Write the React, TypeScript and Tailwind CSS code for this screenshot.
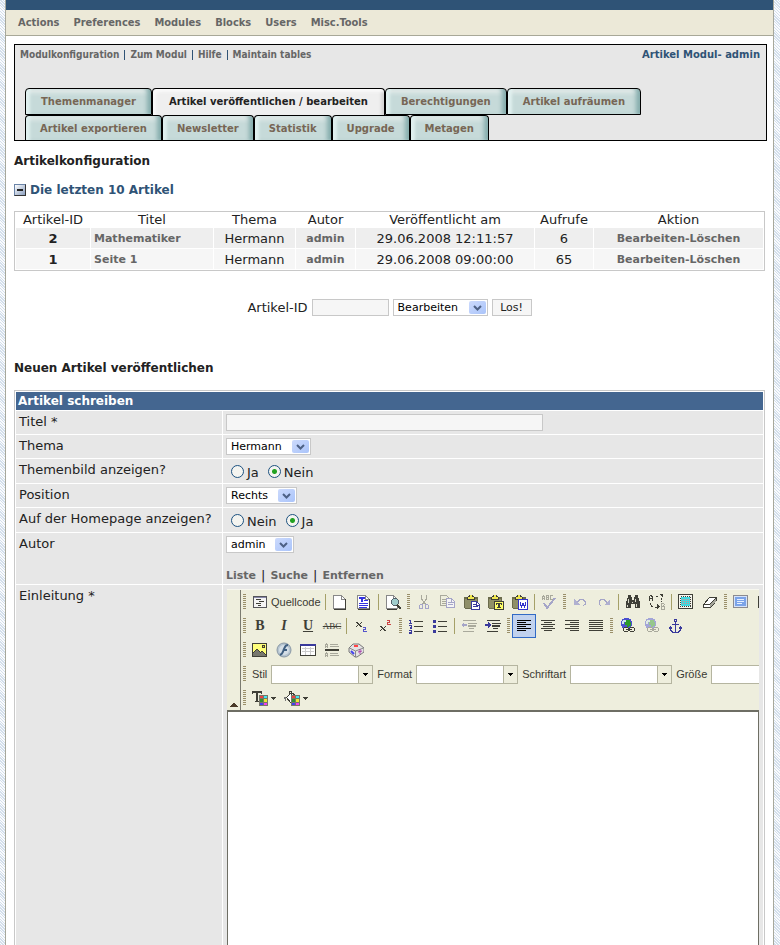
import type { ReactNode } from "react";

const menu = ["Actions", "Preferences", "Modules", "Blocks", "Users", "Misc.Tools"];
const moduleLinks = ["Modulkonfiguration", "Zum Modul", "Hilfe", "Maintain tables"];
const tabRows = [
  ["Themenmanager", "Artikel veröffentlichen / bearbeiten", "Berechtigungen", "Artikel aufräumen"],
  ["Artikel exportieren", "Newsletter", "Statistik", "Upgrade", "Metagen"],
];
const activeTab = "Artikel veröffentlichen / bearbeiten";

const articles = [
  { id: 2, title: "Mathematiker", topic: "Hermann", author: "admin", date: "29.06.2008 12:11:57", hits: 6 },
  { id: 1, title: "Seite 1", topic: "Hermann", author: "admin", date: "29.06.2008 09:00:00", hits: 65 },
];

const INK = "#3f3f37";
const NAVY = "#3a3a9c";
const DIM = "#a9a99c";

const clipboard = (
  <>
    <path d="M0 3h14v11h-1v1h-12v-1h-1z" fill="#6b6b4c" />
    <path d="M1 5h12v9h-12z" fill="#8f8f68" />
    <path d="M3 3h8v2h-8zM6 1h2v2h-2z" fill="#f0e850" />
    <path d="M5 1h1v1h-1zM8 1h1v1h-1zM4 2h2v1h-2zM8 2h2v1h-2zM3 3h1v2h-1zM10 3h1v2h-1zM3 5h8v1h-8z" fill={INK} />
  </>
);

const globe = (
  <>
    <path d="M5 0h5v1h2v2h1v5h-1v2h-2v1h-5v-1h-2v-2h-1v-5h1v-2h2z" fill="#4a4fd0" />
    <path d="M6 2h5v2h1v4h-2v1h-2v-2h-2v-3h-1v-1h1zM5 9h3v1h-3z" fill="#2c9a2c" />
    <path d="M4 2h3v2h-2v2h-2v-3h1z" fill="#cfe8ee" />
  </>
);

const chain = (color: string) => (
  <g fill="#eeeedd" stroke={color}>
    <path d="M5.500 9.500h3l1 1v2l-1 1h-3l-1-1v-2z" />
    <path d="M11.500 9.500h3l1 1v2l-1 1h-3l-1-1v-2z" />
    <path d="M7 11.500h6" />
  </g>
);

const swatches = (
  <>
    <path d="M7 5h9v11h-9z" fill="#77776a" />
    <path d="M8 6h3v2h-3z" fill="#f04040" />
    <path d="M12 6h3v2h-3z" fill="#40e8f0" />
    <path d="M8 9h3v3h-3z" fill="#309030" />
    <path d="M12 9h3v3h-3z" fill="#f0e830" />
    <path d="M8 13h3v2h-3z" fill="#4040f0" />
    <path d="M12 13h3v2h-3z" fill="#f040f0" />
  </>
);

const icons: Record<string, ReactNode> = {
  Quellcode: (
    <>
      <path d="M1.500 2.500h13v11h-13z" fill="#f4f4f4" stroke="#55555a" />
      <path d="M2 3h12v1h-12z" fill="#8888aa" />
      <path d="M4 5.500h5M7 7.500h5M4 9.500h5M6 11.500h3" stroke={INK} />
    </>
  ),
  "Neue Seite": (
    <>
      <path d="M1.500 1.500h8l4 4v9h-12z" fill="#fff" stroke="#888" />
      <path d="M9.500 1.500v4h4" fill="none" stroke="#888" />
      <path d="M13 5h1v11h-12v-1h11z" fill={INK} />
    </>
  ),
  Vorlagen: (
    <>
      <path d="M1.500 1.500h8l4 4v9h-12z" fill="#fff" stroke="#888" />
      <path d="M9.500 1.500v4h4" fill="none" stroke="#888" />
      <path d="M3 3h6v2h-2v3h-2v-3h-2zM8 6h4v1h-4zM3 9h9v1h-9zM3 11h9v1h-9zM3 13h8v1h-8z" fill="#3333e0" />
      <path d="M13 5h1v11h-12v-1h11z" fill={INK} />
    </>
  ),
  Vorschau: (
    <>
      <path d="M1.500 1.500h7l4 4v9h-11z" fill="#fff" stroke="#888" />
      <path d="M8.500 1.500v4h4" fill="none" stroke="#888" />
      <path d="M2 15.500h10" stroke={INK} />
      <path d="M8.500 4.500h3l2 2v3l-2 2h-3l-2-2v-3z" fill="#a0cccc" stroke="#55606a" />
      <path d="M12 11l4 4" stroke={INK} strokeWidth="2" />
    </>
  ),
  Ausschneiden: (
    <>
      <path d="M5.500 1v4l4 5M10.500 1v4l-4 5" stroke={DIM} fill="none" />
      <path d="M4.500 10.500h2v4h-3v-3zM9.500 10.500h2l1 1v3h-3z" stroke="#a5a5c8" fill="none" />
    </>
  ),
  Kopieren: (
    <>
      <path d="M.5 1.500h6l3 3v7h-9z" fill="#eeeedd" stroke={DIM} />
      <path d="M2 5.500h4M2 7.500h4M2 9.500h4" stroke={DIM} />
      <path d="M6.500 4.500h5l3 3v6h-8z" fill="#f4f4f4" stroke="#a5a5c8" />
      <path d="M8 8.500h3M8 10.500h5M11.500 5v3h3" stroke="#a5a5c8" fill="none" />
    </>
  ),
  Einfügen: (
    <>
      {clipboard}
      <path d="M7.500 7.500h5l3 3v5h-8z" fill="#fff" stroke={NAVY} />
      <path d="M9 10.500h3M9 12.500h5M12.500 8v3h3" stroke={NAVY} fill="none" />
    </>
  ),
  "Als Text einfügen": (
    <>
      {clipboard}
      <path d="M6.500 7.500h9v8h-9z" fill="#ffff66" stroke={INK} />
      <path d="M8 9h6v2h-1v-1h-1v3h1v1h-4v-1h1v-3h-1v1h-1z" fill={INK} />
    </>
  ),
  "Aus Word einfügen": (
    <>
      {clipboard}
      <path d="M6.500 5.500h9v10h-9z" fill="#fff" stroke="#3333cc" />
      <path d="M8 8h1v3h1v-2h2v2h1v-3h1v4h-1v2h-1v-2h-2v2h-1v-2h-1z" fill="#3333cc" />
    </>
  ),
  Rechtschreibung: (
    <>
      <path d="M1.500 6v-3l1-1 1 1v3M1.500 4.500h2M5.500 1.500v4h2v-4zM5.500 3.500h2M12 1.500h-2.500v4h2.500" stroke={DIM} fill="none" />
      <path d="M3 9l3 5 8-10" stroke="#a5a5c8" strokeWidth="2" fill="none" />
    </>
  ),
  Rückgängig: (
    <>
      <path d="M5 8.500l3-3h3l2 2v3l-2 1" stroke="#a5a5c8" fill="none" />
      <path d="M2 5v6h6z" fill="#b0b0d0" />
    </>
  ),
  Wiederherstellen: (
    <>
      <path d="M11 8.500l-3-3h-3l-2 2v3l2 1" stroke="#a5a5c8" fill="none" />
      <path d="M14 5v6h-6z" fill="#b0b0d0" />
    </>
  ),
  Suchen: (
    <>
      <path d="M3 1h3v2h1v3h2v-3h1v-2h3v3h1v3h1v7h-5v-4h-4v4h-5v-7h1v-3h1z" fill={INK} />
      <path d="M3 5h1v4h-1zM10 5h1v3h-1zM2 11h1v2h-1zM11 10h1v3h-1zM7 8h1v1h-1z" fill="#d8d8c8" />
    </>
  ),
  Ersetzen: (
    <>
      <path d="M.5 7v-4l1.500-2 1.500 2v4M.5 4.500h3" stroke={INK} fill="none" />
      <path d="M7 2.500h3M12.500 4v4M1.500 9v2l2 2M6 13.500h3" stroke={INK} fill="none" strokeDasharray="2 1" />
      <path d="M10 0h4v4zM8 10v5l3-2z" fill={INK} />
      <path d="M12.500 9.500h2l1 1-1 1.500 1 1v2h-3zM12.500 12.500h3" stroke={DIM} fill="none" />
    </>
  ),
  "Alles auswählen": (
    <>
      <path d="M.5 .5h14v14h-14z" fill="#f6f6ee" stroke={INK} />
      <path d="M3 3h9v9h-9z" fill="#40d8e0" />
      <path d="M2.500 2.500h10v10h-10z" fill="none" stroke={INK} strokeDasharray="1 1" />
      <path d="M4 5.500h7M4 7.500h7M4 9.500h7" stroke="#d8908a" strokeDasharray="1 1" />
    </>
  ),
  "Formatierungen entfernen": (
    <>
      <path d="M1.500 10.500l6-7h7v3l-6 7h-7z" fill="#fff" stroke={INK} />
      <path d="M8 11l6-7v3l-6 6z" fill="#a5a59a" />
      <path d="M1.500 10.500h6l7-7" fill="none" stroke={INK} />
    </>
  ),
  Formular: (
    <>
      <path d="M.5 1.500h14v12h-14z" fill="#d5e3fa" stroke="#8a8a90" />
      <path d="M2 3h11v9h-11z" fill="#7ba3e8" />
      <path d="M4 5.500h7M4 7.500h7M4 9.500h5" stroke="#e5efff" />
    </>
  ),
  Checkbox: <path d="M1.500 2.500h12v11h-12z" fill="#fff" stroke={INK} />,
  Tiefgestellt: (
    <>
      <path d="M3 4h2v1h1v1h1v-1h1v-1h1v1h-1v1h-1v1h1v1h1v1h-2v-1h-1v-1h-1v1h-1v1h-1v-1h1v-1h1v-1h-1v-1h-1z" fill={INK} />
      <path d="M10 9.500h2.500v2h-2v2h3" stroke="#5555cc" fill="none" />
    </>
  ),
  Hochgestellt: (
    <>
      <path d="M3 8h2v1h1v1h1v-1h1v-1h1v1h-1v1h-1v1h1v1h1v1h-2v-1h-1v-1h-1v1h-1v1h-1v-1h1v-1h1v-1h-1v-1h-1z" fill={INK} />
      <path d="M10 2.500h2.500v2h-2v2h3" stroke="#c44" fill="none" />
    </>
  ),
  "Nummerierte Liste": (
    <>
      <path d="M6 3.500h9M6 8.500h9M6 13.500h9" stroke={INK} />
      <path d="M1 2.500h1.500v3M1 5.500h3M1 7.500h2v2h-1v1h2M1 12.500h2v3h-2M1 14h2" stroke={NAVY} fill="none" />
    </>
  ),
  Liste: (
    <>
      <path d="M6 3.500h9M6 8.500h9M6 13.500h9" stroke={INK} />
      <path d="M1 2h3v3h-3zM1 7h3v3h-3zM1 12h3v3h-3z" fill={NAVY} />
    </>
  ),
  "Einzug verringern": (
    <>
      <path d="M2 2.500h13M8 10.500h5M2 13.500h11" stroke={DIM} />
      <path d="M7 5h9v1h-9zM7 7h8v2h-8z" fill={DIM} />
      <path d="M0 7l3-3v2h3v2h-3v2z" fill="#a5a5c8" />
    </>
  ),
  "Einzug erhöhen": (
    <>
      <path d="M2 2.500h13M8 10.500h5M2 13.500h11" stroke={INK} />
      <path d="M7 5h9v1h-9zM7 7h8v2h-8z" fill={INK} />
      <path d="M6 7l-3-3v2h-3v2h3v2z" fill={NAVY} />
    </>
  ),
  Linksbündig: <path d="M1 2.500h14M1 4.500h9M1 6.500h14M1 8.500h9M1 10.500h14M1 12.500h9" stroke="#000" />,
  Zentriert: <path d="M1 2.500h14M4 4.500h8M1 6.500h14M3 8.500h10M1 10.500h14M4 12.500h8" stroke={INK} />,
  Rechtsbündig: <path d="M1 2.500h14M6 4.500h9M1 6.500h14M6 8.500h9M1 10.500h14M6 12.500h9" stroke={INK} />,
  Blocksatz: <path d="M1 2.500h14M1 4.500h14M1 6.500h14M1 8.500h14M1 10.500h14M1 12.500h14" stroke={INK} />,
  Link: (
    <>
      {globe}
      {chain(INK)}
    </>
  ),
  "Link entfernen": (
    <>
      <g opacity=".45">{globe}</g>
      {chain(DIM)}
    </>
  ),
  Anker: (
    <>
      <path d="M7.500 1.500h2v2h-2z" fill="none" stroke={NAVY} />
      <path d="M8 4h1v11h-1zM5 6h7v1h-7z" fill={NAVY} />
      <path d="M3.500 9v3l2 2h6l2-2v-3" stroke={NAVY} fill="none" />
      <path d="M2 11v-1l1-2h1l1 2v1zM12 11v-1l1-2h1l1 2v1z" fill={NAVY} />
    </>
  ),
  Bild: (
    <>
      <path d="M.5 1.500h14v13h-14z" fill="#ffff7a" stroke={INK} />
      <path d="M10.500 3.500h2v2h-2z" fill="#ffe030" stroke={INK} />
      <path d="M1 14v-3l4-4 3 3 2-1 4 4v1z" fill="#77776e" />
      <path d="M1 11l4-4 3 3M8 11l2-2 4 4" stroke={INK} fill="none" />
    </>
  ),
  Flash: (
    <g shapeRendering="auto">
      <circle cx="8" cy="8" r="7" fill="#b5c4d0" stroke="#8a98a5" />
      <circle cx="8" cy="8" r="5" fill="#d5dee6" />
      <path d="M12 3c-3 0-3 2-4 4s-1 5-4 6" stroke="#3f5f80" strokeWidth="2" fill="none" />
      <path d="M7 8h4" stroke="#3f5f80" strokeWidth="2" />
    </g>
  ),
  Tabelle: (
    <>
      <path d="M.5 2.500h15v11h-15z" fill="#fff" stroke={INK} />
      <path d="M0 2h16v2h-16z" fill={NAVY} />
      <path d="M2 6.500h12M2 9.500h12M5.500 5v8M10.500 5v8" stroke="#ccc" />
    </>
  ),
  Linie: (
    <>
      <path d="M1.500 6v-3l1-1 1 1v3M1.500 4.500h2M1.500 15v-3l1-1 1 1v3M1.500 13.500h2M6 2.500h8M6 4.500h9M6 11.500h8M6 13.500h9" stroke={DIM} fill="none" />
      <path d="M1 7h14v2h-14z" fill={INK} />
    </>
  ),
  Sonderzeichen: (
    <g shapeRendering="auto">
      <path d="M1 6l4-4h6l5 4v4l-7 5-2 0-6-5z" fill="#e4e2e4" stroke="#777" />
      <path d="M1.500 6l6 3 8-3M7.500 9v6" stroke="#888" fill="none" />
      <path d="M6 3h4v2h-4z" fill="#f44" />
      <path d="M3 9l3 3" stroke="#4444ee" strokeWidth="2" />
      <path d="M10 10l4-1M12 7v5" stroke="#a4a" />
    </g>
  ),
  Textfarbe: (
    <>
      <path d="M0 1h10v3h-1v-1h-3v8h1v1h-4v-1h1v-8h-3v1h-1z" fill={INK} />
      {swatches}
    </>
  ),
  Hintergrundfarbe: (
    <>
      <path d="M2.500 7.500l4-4 5 5-3 4h-2z" fill="#fff" stroke={INK} />
      <path d="M5.500 5v-3.500h2v5" stroke={INK} fill="none" />
      <path d="M8 3h2v1h1v1h1v2h-1v-1h-1v-1h-1v-1h-1z" fill={INK} />
      <path d="M0 7h2v4h-1v-2h-1z" fill="#777" />
      {swatches}
    </>
  ),
};

function Icon({ name }: { name: string }) {
  return (
    <svg viewBox="0 0 16 16" className="size-4 shrink-0" shapeRendering="crispEdges" aria-hidden="true">
      {icons[name]}
    </svg>
  );
}

function ToolButton({ name, active }: { name: string; active?: boolean }) {
  return (
    <button
      type="button"
      aria-label={name}
      className={
        active
          ? "flex size-6 shrink-0 items-center justify-center border border-[#316ac5] bg-[#c1d2ee]"
          : "flex size-6 shrink-0 items-center justify-center"
      }
    >
      <Icon name={name} />
    </button>
  );
}

function TextButton({ name, children }: { name: string; children: ReactNode }) {
  return (
    <button
      type="button"
      aria-label={name}
      className="flex size-6 shrink-0 items-center justify-center font-['Liberation_Serif',serif] text-sm text-[#3f3f37]"
    >
      {children}
    </button>
  );
}

function Grip() {
  return (
    <span className="mx-[2px] h-4 w-[3px] shrink-0 bg-[repeating-linear-gradient(180deg,#9a8f6a_0px,#9a8f6a_1px,#eeeedd_1px,#eeeedd_2px)]" />
  );
}

function Separator() {
  return <span className="mx-[2px] h-4 w-px shrink-0 bg-[#a5a068]" />;
}

function Combo({ label }: { label: string }) {
  return (
    <label className="flex shrink-0 items-center gap-1 pl-1">
      {label}
      <span className="relative flex">
        <select className="h-[19px] w-[102px] appearance-none border border-[#b5b5a0] bg-white" />
        <span className="pointer-events-none absolute inset-y-px right-px flex w-[14px] items-center justify-center border-l border-[#b5b5a0] bg-[#eeeedd]">
          <svg viewBox="0 0 5 3" className="h-[3px] w-[5px]" shapeRendering="crispEdges">
            <path d="M0 0h5v1h-1v1h-1v1h-1v-1h-1v-1h-1z" />
          </svg>
        </span>
      </span>
    </label>
  );
}

function ColorButton({ name }: { name: string }) {
  return (
    <button type="button" aria-label={name} className="flex h-6 w-8 shrink-0 items-center gap-[3px] pl-1">
      <Icon name={name} />
      <svg viewBox="0 0 5 3" className="h-[3px] w-[5px]" shapeRendering="crispEdges">
        <path d="M0 0h5v1h-1v1h-1v1h-1v-1h-1v-1h-1z" fill={INK} />
      </svg>
    </button>
  );
}

// "#" starts a new toolbar group, "|" is a divider inside one
function tools(...names: string[]) {
  return names.map((name, i) => {
    if (name === "#") return <Grip key={i} />;
    if (name === "|") return <Separator key={i} />;
    return <ToolButton key={i} name={name} active={name === "Linksbündig"} />;
  });
}

function Editor() {
  return (
    <div className="flex min-w-0 grow flex-col">
      <div className="flex overflow-hidden border-t border-[#f7f7ef] bg-[#eeeedd]">
        <button
          type="button"
          aria-label="Symbolleiste einklappen"
          className="flex w-[14px] shrink-0 items-end justify-center border-r border-[#7b7b70] pb-[3px]"
        >
          <svg viewBox="0 0 8 4" className="h-1 w-2" shapeRendering="crispEdges">
            <path d="M3 0h2v1h1v1h1v1h1v1h-8v-1h1v-1h1v-1h1z" fill="#4a3a2a" />
          </svg>
        </button>
        <div className="min-w-0 grow overflow-hidden font-['Liberation_Sans',sans-serif] text-[11px] leading-4 text-[#3a3a33]">
          <div className="flex h-6 items-center">
            <Grip />
            <button type="button" className="flex h-6 w-[75px] shrink-0 items-center gap-[3px] pl-1">
              <Icon name="Quellcode" />
              Quellcode
            </button>
            {tools(
              "|", "Neue Seite", "Vorlagen", "|", "Vorschau",
              "#", "Ausschneiden", "Kopieren", "Einfügen", "Als Text einfügen", "Aus Word einfügen", "|", "Rechtschreibung",
              "#", "Rückgängig", "Wiederherstellen", "|", "Suchen", "Ersetzen", "|", "Alles auswählen", "Formatierungen entfernen",
              "#", "Formular", "Checkbox",
            )}
          </div>
          <div className="flex h-6 items-center">
            <Grip />
            <TextButton name="Fett"><b>B</b></TextButton>
            <TextButton name="Kursiv"><b><i>I</i></b></TextButton>
            <TextButton name="Unterstrichen"><b className="underline">U</b></TextButton>
            <TextButton name="Durchgestrichen"><s className="text-[9px]">ABC</s></TextButton>
            {tools(
              "|", "Tiefgestellt", "Hochgestellt",
              "#", "Nummerierte Liste", "Liste", "|", "Einzug verringern", "Einzug erhöhen",
              "#", "Linksbündig", "Zentriert", "Rechtsbündig", "Blocksatz",
              "#", "Link", "Link entfernen", "Anker",
            )}
          </div>
          <div className="flex h-6 items-center">
            {tools("#", "Bild", "Flash", "Tabelle", "Linie", "Sonderzeichen")}
          </div>
          <div className="flex h-6 items-center">
            <Grip />
            <Combo label="Stil" />
            <Combo label="Format" />
            <Combo label="Schriftart" />
            <Combo label="Größe" />
          </div>
          <div className="flex h-6 items-center">
            <Grip />
            <ColorButton name="Textfarbe" />
            <ColorButton name="Hintergrundfarbe" />
          </div>
        </div>
      </div>
      <textarea
        id="einleitung"
        className="min-h-[220px] w-full grow resize-none border border-t-2 border-b-0 border-[#6e6e64] bg-white outline-none"
      />
    </div>
  );
}

function Select({ id, label, value, width }: { id?: string; label?: string; value: string; width: string }) {
  return (
    <span className={`relative inline-flex ${width}`}>
      <select
        id={id}
        aria-label={label}
        defaultValue={value}
        className="h-[17px] w-full appearance-none border border-[#c8c8c8] bg-white pl-1 text-[11px] leading-[15px] text-black"
      >
        <option>{value}</option>
      </select>
      <span className="pointer-events-none absolute top-[2px] right-[2px] flex h-[13px] w-[17px] items-center justify-center rounded-[2px] bg-linear-to-br from-[#ccdafc] to-[#aac4fa]">
        <svg viewBox="0 0 9 6" className="h-[6px] w-[9px]">
          <path d="M1 1l3.500 3.500L8 1" fill="none" stroke="#4d6185" strokeWidth="2" />
        </svg>
      </span>
    </span>
  );
}

function Radio({ name, label, checked }: { name: string; label: string; checked?: boolean }) {
  return (
    <label className="flex items-center gap-[3px]">
      <input
        type="radio"
        name={name}
        defaultChecked={checked}
        className="size-[13px] appearance-none rounded-full border border-[#1c5180] bg-[#f4f4f0] checked:bg-[radial-gradient(circle,#21a121_0px,#21a121_2px,#f4f4f0_3px)]"
      />
      <span className="pt-1">{label}</span>
    </label>
  );
}

function FormRow({ label, htmlFor, height, children }: { label: string; htmlFor?: string; height: string; children: ReactNode }) {
  return (
    <div className={`flex gap-px ${height}`}>
      <div className="w-[206px] shrink-0 bg-[#e7e7e7] pt-[3px] pl-[3px]">
        {htmlFor ? <label htmlFor={htmlFor}>{label}</label> : label}
      </div>
      <div className="flex min-w-0 grow flex-col bg-[#e7e7e7] pr-1 pl-[3px]">{children}</div>
    </div>
  );
}

const link = "text-[11px] font-bold text-[#666]";

export default function App() {
  return (
    <div className="flex min-h-screen bg-[repeating-linear-gradient(45deg,#d3dfec_0px,#d3dfec_1px,#fafbfd_1px,#fafbfd_2px)] pr-[6px] pl-[5px] font-['DejaVu_Sans',sans-serif] text-[13px] leading-4 text-[#222]">
      <div className="flex min-w-0 grow flex-col border-x border-[#a7a89c] bg-white">
        <div className="h-[10px] shrink-0 bg-[#2f5376]" />
        <nav className="flex h-[26px] shrink-0 items-center gap-[14px] border-b border-[#a8a898] bg-[#ece9d8] pt-px pl-3 font-['DejaVu_Sans_Condensed','DejaVu_Sans',sans-serif] text-[11px] font-bold text-[#666]">
          {menu.map((item) => (
            <a key={item} href="#">{item}</a>
          ))}
        </nav>

        <main className="flex grow flex-col pt-2 pr-[6px] pl-2">
          <header className="border border-black bg-[#e7e7e7] text-[10px] font-bold">
            <div className="flex h-[43px] items-start justify-between pt-[2px] pr-[6px] pl-[5px]">
              <div className="flex items-center font-['DejaVu_Sans_Condensed','DejaVu_Sans',sans-serif]">
                {moduleLinks.map((item, i) => (
                  <a key={item} href="#" className="flex items-center text-[#666]">
                    {i > 0 && <span className="mx-[5px] h-[10px] w-px bg-[#2f5376]" />}
                    {item}
                  </a>
                ))}
              </div>
              <span className="text-[#2f5376]">Artikel Modul- admin</span>
            </div>
            <div className="pl-[10px]">
              {tabRows.map((row, i) => (
                <div key={i} className={i === 0 ? "flex h-[27px]" : "flex h-[25px]"}>
                  {row.map((tab) => (
                    <a
                      key={tab}
                      href="#"
                      className={
                        tab === activeTab
                          ? "flex items-center rounded-t border border-b-0 border-black bg-[#efefef] px-4 whitespace-nowrap text-[#222] shadow-[inset_4px_4px_3px_-1px_#fafafa,inset_-5px_0_3px_-2px_#d5d5d5]"
                          : `flex items-center rounded-t border border-black bg-[#c6dad9] whitespace-nowrap text-[#776655] shadow-[inset_5px_0_3px_-1px_#e0f0ef,inset_-6px_0_4px_-2px_#86adad,inset_0_6px_4px_-2px_#e3eae9] ${i === 1 ? "border-b-0 px-[14px] pt-px" : "px-[15px]"}`
                      }
                    >
                      {tab}
                    </a>
                  ))}
                </div>
              ))}
            </div>
          </header>

          <div className="flex grow flex-col pr-[2px]">
            <h1 className="mt-3 text-xs leading-4 font-bold">Artikelkonfiguration</h1>
            <h2 className="mt-[13px] flex items-center gap-1 text-xs font-bold text-[#2f5376]">
              <button type="button" aria-label="Zuklappen" className="flex size-3 items-center justify-center border border-[#6a84a8] border-r-[#333] border-b-[#333] bg-linear-to-br from-white to-[#8ca0c0]">
                <span className="h-[2px] w-[6px] bg-[#222]" />
              </button>
              Die letzten 10 Artikel
            </h2>

            <table className="mt-[13px] w-full table-fixed border-separate border-spacing-px border border-[#c8c8c8] text-center">
              <colgroup>
                <col className="w-[74px]" />
                <col className="w-[122px]" />
                <col className="w-[81px]" />
                <col className="w-[59px]" />
                <col className="w-[178px]" />
                <col className="w-[58px]" />
                <col />
              </colgroup>
              <thead>
                <tr className="h-[14px] leading-[14px]">
                  {["Artikel-ID", "Titel", "Thema", "Autor", "Veröffentlicht am", "Aufrufe", "Aktion"].map((head) => (
                    <th key={head} className="font-normal">{head}</th>
                  ))}
                </tr>
              </thead>
              <tbody>
                {articles.map((article, i) => (
                  <tr key={article.id} className={i === 0 ? "h-5 bg-[#eeeeee]" : "h-5 bg-[#f6f6f6]"}>
                    <td className="pt-[2px] font-bold">{article.id}</td>
                    <td className="pt-px pl-[3px] text-left"><a href="#" className={link}>{article.title}</a></td>
                    <td className="pt-[2px]">{article.topic}</td>
                    <td className="pt-px"><a href="#" className={link}>{article.author}</a></td>
                    <td className="pt-[2px]">{article.date}</td>
                    <td className="pt-[2px]">{article.hits}</td>
                    <td className={`pt-[2px] ${link}`}><a href="#">Bearbeiten</a>-<a href="#">Löschen</a></td>
                  </tr>
                ))}
              </tbody>
            </table>

            <form className="mt-7 flex items-center justify-center gap-1">
              <label htmlFor="artikel-id">Artikel-ID</label>
              <input id="artikel-id" className="h-[17px] w-[77px] border border-[#c8c8c8] bg-[#f6f6f6]" />
              <Select label="Aktion" value="Bearbeiten" width="w-[95px]" />
              <button type="button" className="h-[17px] w-10 border border-[#c8c8c8] bg-[#f6f6f6] text-[11px] leading-[15px]">Los!</button>
            </form>

            <h2 className="mt-11 text-xs leading-4 font-bold">Neuen Artikel veröffentlichen</h2>

            <form className="mt-[14px] flex grow flex-col gap-px border border-b-0 border-[#c8c8c8] px-px pt-px">
              <h3 className="h-[18px] bg-[#446690] pl-[2px] text-xs leading-[18px] font-bold text-white">Artikel schreiben</h3>
              <FormRow label="Titel *" htmlFor="titel" height="h-[23px]">
                <input id="titel" className="mt-[3px] h-[17px] w-[317px] border border-[#c8c8c8] bg-[#f6f6f6]" />
              </FormRow>
              <FormRow label="Thema" htmlFor="thema" height="h-[23px]">
                <div className="flex pt-[3px]"><Select id="thema" value="Hermann" width="w-[85px]" /></div>
              </FormRow>
              <FormRow label="Themenbild anzeigen?" height="h-6">
                <div className="flex gap-[9px] pt-[2px] pl-[5px]">
                  <Radio name="themenbild" label="Ja" />
                  <Radio name="themenbild" label="Nein" checked />
                </div>
              </FormRow>
              <FormRow label="Position" htmlFor="position" height="h-[23px]">
                <div className="flex pt-[3px]"><Select id="position" value="Rechts" width="w-[71px]" /></div>
              </FormRow>
              <FormRow label="Auf der Homepage anzeigen?" height="h-6">
                <div className="flex gap-[9px] pt-[2px] pl-[5px]">
                  <Radio name="homepage" label="Nein" />
                  <Radio name="homepage" label="Ja" checked />
                </div>
              </FormRow>
              <FormRow label="Autor" htmlFor="autor" height="h-[51px]">
                <div className="flex pt-[3px]"><Select id="autor" value="admin" width="w-[68px]" /></div>
                <div className="flex gap-[5px] pt-[15px]">
                  <a href="#" className={link}>Liste</a>|
                  <a href="#" className={link}>Suche</a>|
                  <a href="#" className={link}>Entfernen</a>
                </div>
              </FormRow>
              <FormRow label="Einleitung *" htmlFor="einleitung" height="grow">
                <div className="flex grow flex-col pt-1 pl-px"><Editor /></div>
              </FormRow>
            </form>
          </div>
        </main>
      </div>
    </div>
  );
}
